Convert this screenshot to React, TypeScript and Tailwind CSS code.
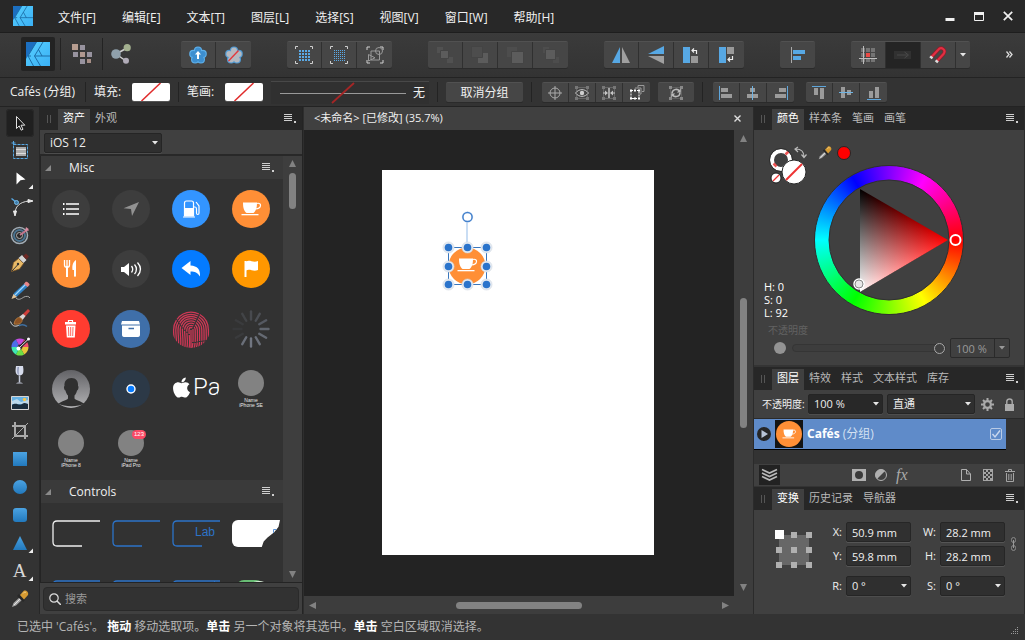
import type { ReactNode } from 'react';
import clsx from 'clsx';
import { FaApple } from 'react-icons/fa';

type SvgProps = { w: number; h?: number; children: ReactNode; className?: string };

function Svg({ w, h = w, children, className }: SvgProps) {
  return (
    <svg width={w} height={h} viewBox={`0 0 ${w} ${h}`} fill="none" className={clsx('shrink-0', className)} aria-hidden="true">
      {children}
    </svg>
  );
}

/* ---------- shared bits ---------- */

function Caret({ className = 'text-[#e6e6e6]' }: { className?: string }) {
  return (
    <Svg w={6} h={4} className={className}>
      <path d="M0 0h6L3 3.4z" fill="currentColor" />
    </Svg>
  );
}

function Separator() {
  return <div className="h-5 w-px shrink-0 bg-[#232323]" />;
}

function PanelMenu() {
  return (
    <button aria-label="面板菜单" className="text-[#cfcfcf]">
      <Svg w={12} h={9}>
        <path d="M0 .5h8M0 2.5h8M0 4.5h8M0 6.5h8" stroke="currentColor" />
        <path d="M10 7h2v2h-2z" fill="currentColor" />
      </Svg>
    </button>
  );
}

function TabBar({ tabs }: { tabs: string[] }) {
  return (
    <div className="flex h-[23px] shrink-0 items-stretch bg-[#272727] pr-1.5">
      <div className="flex w-[18px] items-center pl-[7px]">
        <Svg w={4} h={8}>
          <path d="M.5 0v8M3.5 0v8" stroke="#555" />
        </Svg>
      </div>
      {tabs.map((tab, i) => (
        <button
          key={tab}
          className={clsx('mt-0.5 px-[5px] pb-1 leading-4', i === 0 ? 'bg-[#404040] text-white' : 'text-[#b9b9b9]')}
        >
          {tab}
        </button>
      ))}
      <div className="ml-auto flex items-center">
        <PanelMenu />
      </div>
    </div>
  );
}

type DropdownProps = { label: string; value: string; className?: string; tone?: string };

function Dropdown({ label, value, className, tone = 'bg-[#2f2f2f] text-[#ececec]' }: DropdownProps) {
  return (
    <div className={clsx('relative', className)}>
      <select
        aria-label={label}
        defaultValue={value}
        className={clsx('h-5 w-full appearance-none rounded-xs border border-[#252525] pr-3 pl-[5px] shadow-[0_1px_0_#4d4d4d] outline-none', tone)}
      >
        <option>{value}</option>
      </select>
      <span className="pointer-events-none absolute top-2 right-1">
        <Caret />
      </span>
    </div>
  );
}

/* ---------- title bar ---------- */

function Logo({ size }: { size: number }) {
  return (
    <svg width={size} height={size} viewBox="0 0 24 24" aria-hidden="true">
      <defs>
        <linearGradient id="logo" x1="0" y1="0" x2="1" y2="1">
          <stop offset="0" stopColor="#58d0ff" />
          <stop offset="1" stopColor="#3ab0f5" />
        </linearGradient>
      </defs>
      <path d="M0 0h24v24H0z" fill="url(#logo)" />
      <path d="M0 0h10.500L0 17z" fill="#1c6fc0" />
      <path d="M10.500 0L2 14l5.500 10M17 0L8.500 14H24M8.500 14l6 10M12.500 7.500L16 14M2 14h3" fill="none" stroke="#17649f" strokeWidth=".9" />
    </svg>
  );
}

const menus = ['文件[F]', '编辑[E]', '文本[T]', '图层[L]', '选择[S]', '视图[V]', '窗口[W]', '帮助[H]'];

function TitleBar() {
  return (
    <header className="flex h-[33px] shrink-0 items-center border-b border-[#1e1e1e] bg-[#282828] pl-[13px]">
      <Logo size={20} />
      <nav className="ml-[25px] flex gap-[26px] pt-1 text-xs text-[#f0f0f0]">
        {menus.map((menu) => (
          <button key={menu}>{menu}</button>
        ))}
      </nav>
      <div className="ml-auto flex items-center gap-[19px] pr-3 text-[#f0f0f0]">
        <button aria-label="最小化">
          <Svg w={10}>
            <path d="M.5 7h9v3h-9z" fill="currentColor" />
          </Svg>
        </button>
        <button aria-label="最大化">
          <Svg w={10}>
            <path d="M.5 1.500h9v8h-9z" stroke="currentColor" />
            <path d="M0 1h10v3H0z" fill="currentColor" />
          </Svg>
        </button>
        <button aria-label="关闭">
          <Svg w={10}>
            <path d="M.8.8l8.400 8.400M9.200.8L.8 9.200" stroke="currentColor" strokeWidth="1.700" />
          </Svg>
        </button>
      </div>
    </header>
  );
}

/* ---------- main toolbar ---------- */

type Item = { name: string; icon: ReactNode; className?: string };

function ButtonGroup({ items, small }: { items: Item[]; small?: boolean }) {
  return (
    <div className="flex shrink-0 divide-x divide-[#303030] rounded-xs border-t border-[#515151] bg-[#464646] shadow-[0_1px_0_#2b2b2b]">
      {items.map((item) => (
        <button
          key={item.name}
          aria-label={item.name}
          className={clsx('flex items-center justify-center', small ? 'h-[19px] w-[27px]' : 'h-[26px]', !small && (item.className ?? 'w-[35px]'))}
        >
          {item.icon}
        </button>
      ))}
    </div>
  );
}

const petals = [
  [9, 4.5],
  [13.7, 7.9],
  [11.9, 13.4],
  [6.1, 13.4],
  [4.3, 7.9],
];

function Flower({ fill, edge }: { fill: string; edge: string }) {
  return (
    <>
      {petals.map(([x, y]) => (
        <circle key={x} cx={x} cy={y} r="4.100" fill={edge} />
      ))}
      {petals.map(([x, y]) => (
        <circle key={x} cx={x} cy={y} r="3" fill={fill} />
      ))}
      <circle cx="9" cy="9.500" r="5" fill={fill} />
    </>
  );
}

const corners = 'M1 4V1h3M14 1h3v3M17 14v3h-3M4 17H1v-3';

const styleItems: Item[] = [
  {
    name: '插入样式',
    icon: (
      <Svg w={18}>
        <Flower fill="#3d8fd0" edge="#5fb0ea" />
        <path d="M9 5l3 3.500h-2V13H8V8.500H6z" fill="#fff" />
      </Svg>
    ),
  },
  {
    name: '清除样式',
    icon: (
      <Svg w={18}>
        <Flower fill="#b5b9c0" edge="#4f9ad4" />
        <path d="M3.500 15L13.500 4.500" stroke="#e2383d" strokeWidth="1.400" />
      </Svg>
    ),
  },
];

const gridItems: Item[] = [
  {
    name: '像素对齐',
    icon: (
      <Svg w={18}>
        <path d="M.5 3V.5H3M15 .5h2.500V3M17.500 15v2.500H15M3 17.500H.5V15" stroke="#d0d0d0" />
        <path d="M5 4v11M8 4v11M11 4v11M14 4v11" stroke="#5aa9e6" strokeWidth="2" strokeDasharray="2 1" />
      </Svg>
    ),
  },
  {
    name: '细网格',
    icon: (
      <Svg w={18}>
        <path d="M.5 3V.5H3M15 .5h2.500V3M17.500 15v2.500H15M3 17.500H.5V15" stroke="#d0d0d0" />
        <path d="M4.500 4v11M6.500 4v11M8.500 4v11M10.500 4v11M12.500 4v11M14.500 4v11" stroke="#5aa9e6" strokeDasharray="1 1" />
      </Svg>
    ),
  },
  {
    name: '对象边界',
    icon: (
      <Svg w={18}>
        <path d={corners} stroke="#d0d0d0" />
        <path d="M5 5h8.500v9H5z" stroke="#999" />
        <circle cx="13" cy="5" r="3.500" stroke="#999" />
        <path d="M2.500 8.500v6.500l6.500-3.200z" stroke="#999" />
      </Svg>
    ),
  },
];

const orderItems: Item[] = [
  {
    name: '移到最后',
    icon: (
      <Svg w={18}>
        <path d="M1 1h6v6H1zM11 11h6v6h-6z" fill="#515151" />
        <path d="M4.500 4.500h8v8h-8z" fill="#5c5c5c" stroke="#444" />
      </Svg>
    ),
  },
  {
    name: '后移一层',
    icon: (
      <Svg w={18}>
        <path d="M7 7h10v10H7z" fill="#5c5c5c" />
        <path d="M.5.5h11v11H.5z" fill="#4d4d4d" stroke="#444" />
      </Svg>
    ),
  },
  {
    name: '前移一层',
    icon: (
      <Svg w={18}>
        <path d="M1 1h10v10H1z" fill="#4d4d4d" />
        <path d="M5.500 5.500h12v12h-12z" fill="#5c5c5c" stroke="#444" />
      </Svg>
    ),
  },
  {
    name: '移到最前',
    icon: (
      <Svg w={18}>
        <path d="M1 1h6v6H1zM11 11h6v6h-6z" fill="#4d4d4d" />
        <path d="M3.500 3.500h10v10h-10z" fill="#5c5c5c" stroke="#444" />
      </Svg>
    ),
  },
];

const flipItems: Item[] = [
  {
    name: '水平翻转',
    icon: (
      <Svg w={18}>
        <path d="M8 1v16H0z" fill="#57a8e4" />
        <path d="M10 1v16h8z" fill="#a0a0a0" />
      </Svg>
    ),
  },
  {
    name: '垂直翻转',
    icon: (
      <Svg w={18}>
        <path d="M17 0v8H1z" fill="#57a8e4" />
        <path d="M17 18v-8H1z" fill="#a0a0a0" />
      </Svg>
    ),
  },
  {
    name: '逆时针旋转',
    icon: (
      <Svg w={18}>
        <path d="M1 1h7v16H1z" fill="#57a8e4" />
        <path d="M9 10h7v7H9z" fill="#999" />
        <path d="M14.500 8V4.500H10M12 2.500l-2 2 2 2" stroke="#eee" strokeWidth="1.200" />
      </Svg>
    ),
  },
  {
    name: '顺时针旋转',
    icon: (
      <Svg w={18}>
        <path d="M1 1h7v16H1z" fill="#57a8e4" />
        <path d="M9 1h7v7H9z" fill="#999" />
        <path d="M14.500 10v3.500H10M12 11.500l-2 2 2 2" stroke="#eee" strokeWidth="1.200" />
      </Svg>
    ),
  },
];

const alignItems: Item[] = [
  {
    name: '对齐',
    icon: (
      <Svg w={16}>
        <path d="M1.500 0v16" stroke="#aaa" />
        <path d="M3 3h12v4H3zM3 9h8v4H3z" fill="#57a8e4" />
      </Svg>
    ),
  },
];

const snapItems: Item[] = [
  {
    name: '显示网格',
    icon: (
      <Svg w={18}>
        <path d="M2 2h4v4H2zM7 2h4v4H7zM12 2h4v4h-4zM2 7h4v4H2zM12 7h4v4h-4zM2 12h4v4H2zM7 12h4v4H7zM12 12h4v4h-4z" fill="#747474" />
        <path d="M7 7h4v4H7z" fill="#ea4a45" />
        <path d="M4.500 0v18M0 12.500h18" stroke="#bdbdbd" />
      </Svg>
    ),
  },
  {
    name: '移动方式',
    className: 'w-[35px] bg-[#242424]',
    icon: (
      <Svg w={18} h={10}>
        <path d="M0 1h17v8H0z" fill="#313131" />
        <path d="M3 5h11M10.500 2l4 3-4 3" stroke="#494949" />
      </Svg>
    ),
  },
  {
    name: '吸附',
    icon: (
      <Svg w={18}>
        <path d="M2.500 11L9 4c3.500-4 8.500 0 5.500 4L8 15" stroke="#8f1d28" strokeWidth="3.600" />
        <path d="M2.500 11L9 4c3.500-4 8.500 0 5.500 4L8 15" stroke="#e22f43" strokeWidth="2.200" />
        <path d="M1.500 12.300l1.600-1.800M7 16.300l1.600-1.800" stroke="#ddd" strokeWidth="3.200" />
      </Svg>
    ),
  },
  { name: '吸附选项', className: 'w-3.5', icon: <Caret /> },
];

function Toolbar() {
  return (
    <div className="flex h-[45px] shrink-0 items-center border-b border-[#232323] bg-linear-to-b from-[#3b3b3b] to-[#333] pr-3 pb-0.5 pl-[21px]">
      <button aria-label="设计角色" className="flex size-[34px] items-center justify-center rounded-xs bg-[#232323]">
        <Logo size={24} />
      </button>
      <div className="ml-[5px] h-8 w-px bg-[#232323]" />
      <button aria-label="像素角色" className="flex w-[41px] justify-center">
        <Svg w={20}>
          <path d="M0 0h6v6H0z" fill="#b79d90" />
          <path d="M8 1h5v5H8zM1 8h5v5H1zM15 8h5v5h-5zM8 15h5v5H8z" fill="#98939f" />
          <path d="M8 8h5v5H8z" fill="#b0988f" />
          <path d="M15 15h4v4h-4z" fill="#a78e86" />
        </Svg>
      </button>
      <div className="h-8 w-px bg-[#232323]" />
      <button aria-label="导出角色" className="ml-2">
        <Svg w={20}>
          <path d="M5 10L16 4M5 10l10 7" stroke="#d0d0d0" strokeWidth="1.500" />
          <circle cx="5" cy="10" r="4.800" fill="#8fa0ab" />
          <circle cx="16.200" cy="3.700" r="3.600" fill="#a3b08f" />
          <circle cx="15" cy="16.800" r="3" fill="#b1acb8" />
        </Svg>
      </button>
      <div className="ml-[50px] flex gap-9">
        <ButtonGroup items={styleItems} />
        <ButtonGroup items={gridItems} />
        <ButtonGroup items={orderItems} />
        <ButtonGroup items={flipItems} />
        <ButtonGroup items={alignItems} />
        <ButtonGroup items={snapItems} />
      </div>
      <button aria-label="更多" className="ml-auto text-[#ddd]">
        <Svg w={7}>
          <path d="M.5.500l2.500 3-2.500 3M3.500.500l2.500 3-2.500 3" stroke="currentColor" strokeWidth="1.300" />
        </Svg>
      </button>
    </div>
  );
}

/* ---------- context bar ---------- */

function NoneSwatch({ label }: { label: string }) {
  return (
    <button aria-label={label} className="overflow-hidden rounded-xs shadow-[0_1px_0_#555]">
      <Svg w={38} h={18}>
        <path d="M0 0h38v18H0z" fill="#fff" />
        <path d="M9.500 18L28.500 0" stroke="#e02b2b" strokeWidth="1.500" />
      </Svg>
    </button>
  );
}

const frame = 'M2.500 2.500h11v11h-11z';
const frameDots = 'M1 1h3v3H1zM12 1h3v3h-3zM1 12h3v3H1zM12 12h3v3h-3z';

const transformItems: Item[] = [
  {
    name: '变换原点',
    icon: (
      <Svg w={16}>
        <circle cx="8" cy="8" r="5" stroke="#aaa" />
        <path d="M8 1v14M1 8h14" stroke="#aaa" />
      </Svg>
    ),
  },
  {
    name: '隐藏选区',
    icon: (
      <Svg w={16}>
        <path d={frame} stroke="#666" />
        <path d={frameDots} fill="#777" />
        <path d="M1.500 8c3.500-4.500 9.500-4.500 13 0-3.500 4.500-9.500 4.500-13 0z" fill="#464646" stroke="#c4c4c4" />
        <circle cx="8" cy="8" r="2.200" fill="#d0d0d0" />
      </Svg>
    ),
  },
  {
    name: '显示对齐手柄',
    icon: (
      <Svg w={16}>
        <path d={frame} stroke="#666" />
        <path d={frameDots} fill="#777" />
        <path d="M8 3v10" stroke="#c4c4c4" strokeWidth="1.500" />
        <path d="M2 8h3M14 8h-3" stroke="#c4c4c4" />
        <path d="M4 5.500L7 8l-3 2.500zM12 5.500L9 8l3 2.500z" fill="#c4c4c4" />
      </Svg>
    ),
  },
  {
    name: '循环选择框',
    icon: (
      <Svg w={16}>
        <path d="M6 3.500V3h6v6h-1M9 2.500V.500h6v6h-2" stroke="#999" />
        <path d="M2 5.500h8v8H2z" stroke="#fff" strokeDasharray="2 1" />
        <path d="M1 4.500h2v2H1zM9 4.500h2v2H9zM1 12.500h2v2H1zM9 12.500h2v2H9zM5 4.500h2v2H5zM5 12.500h2v2H5z" fill="#fff" />
      </Svg>
    ),
  },
];

const horizontalItems: Item[] = [
  {
    name: '左对齐',
    icon: (
      <Svg w={14}>
        <path d="M.5 0v14" stroke="#5ea6dc" />
        <path d="M2 2h7v4H2zM2 8h11v4H2z" fill="#9b9b9b" />
      </Svg>
    ),
  },
  {
    name: '水平居中',
    icon: (
      <Svg w={14}>
        <path d="M4 2h5v4H4zM1 8h11v4H1z" fill="#9b9b9b" />
        <path d="M6.500 0v14" stroke="#6fb4e4" />
      </Svg>
    ),
  },
  {
    name: '右对齐',
    icon: (
      <Svg w={14}>
        <path d="M13.500 0v14" stroke="#5ea6dc" />
        <path d="M5 2h7v4H5zM1 8h11v4H1z" fill="#9b9b9b" />
      </Svg>
    ),
  },
];

const verticalItems: Item[] = [
  {
    name: '顶部对齐',
    icon: (
      <Svg w={14}>
        <path d="M0 .5h14" stroke="#5ea6dc" />
        <path d="M2 2h4v7H2zM8 2h4v11H8z" fill="#9b9b9b" />
      </Svg>
    ),
  },
  {
    name: '垂直居中',
    icon: (
      <Svg w={14}>
        <path d="M2 1h4v11H2zM8 4h4v5H8z" fill="#9b9b9b" />
        <path d="M0 6.500h14" stroke="#6fb4e4" />
      </Svg>
    ),
  },
  {
    name: '底部对齐',
    icon: (
      <Svg w={14}>
        <path d="M0 13.500h14" stroke="#5ea6dc" />
        <path d="M2 5h4v7H2zM8 1h4v11H8z" fill="#9b9b9b" />
      </Svg>
    ),
  },
];

function ContextBar() {
  return (
    <div className="flex h-[29px] shrink-0 items-center border-b border-[#232323] bg-[#333] pl-2.5 text-xs text-[#f0f0f0]">
      <span className="w-[67px] shrink-0 whitespace-nowrap">Cafés (分组)</span>
      <div className="ml-2 flex items-center gap-2">
        <Separator />
        <span className="mr-0.5 w-7 whitespace-nowrap">填充:</span>
        <NoneSwatch label="填充" />
        <Separator />
        <span className="mr-0.5 w-7 whitespace-nowrap">笔画:</span>
        <NoneSwatch label="笔画" />
        <button className="flex h-[23px] w-[158px] items-center justify-end gap-1 border-t border-[#484848] bg-[#303030] pr-1">
          <Svg w={130} h={22}>
            <path d="M1 11.500h126" stroke="#999" />
            <path d="M53 21L75 1" stroke="#a52626" strokeWidth="1.800" />
          </Svg>
          无
        </button>
        <Separator />
        <button className="h-5 w-[77px] rounded-xs border-t border-[#515151] bg-[#464646] leading-4 shadow-[0_1px_0_#2b2b2b]">取消分组</button>
        <Separator />
      </div>
      <div className="ml-2.5 flex items-center gap-2">
        <ButtonGroup small items={transformItems} />
        <button aria-label="更新" className="flex h-5 w-9 items-center justify-center rounded-xs border-t border-[#515151] bg-[#464646]">
          <Svg w={16}>
            <path d={frame} stroke="#5e5e5e" />
            <path d={frameDots} fill="#888" />
            <path d="M4 8.500C4 4.500 9 3 11.500 6M12 7.500c0 4-5 5.500-7.500 2.500" stroke="#bbb" strokeWidth="1.500" />
            <path d="M12.800 3.500v4h-4zM3.200 12.500v-4h4z" fill="#bbb" />
          </Svg>
        </button>
        <Separator />
      </div>
      <div className="ml-2.5 flex gap-3">
        <ButtonGroup small items={horizontalItems} />
        <ButtonGroup small items={verticalItems} />
      </div>
    </div>
  );
}

/* ---------- tools column ---------- */

const corner = <path d="M28 19.500V24h-4.500z" fill="#eee" transform="translate(-1 0)" />;

const tools: Item[] = [
  {
    name: '移动工具',
    icon: (
      <Svg w={28}>
        <path d="M10.500 7.500v12l2.700-2.600 2 4.300 1.800-.9-2-4.100h3.800z" fill="#1a1a1a" stroke="#e0e0e0" />
      </Svg>
    ),
  },
  {
    name: '画板工具',
    icon: (
      <Svg w={28}>
        <path d="M7.500 7.500h14v14h-14z" stroke="#57a8e4" strokeDasharray="3 1" />
        <path d="M10 10h10v9H10z" fill="#aaa" />
        <path d="M10 12.500h10M10 16.500h10" stroke="#ddd" />
        <path d="M5.500 6h4M7.500 4v4" stroke="#57a8e4" />
      </Svg>
    ),
  },
  {
    name: '节点工具',
    icon: (
      <Svg w={28}>
        <path d="M10.500 7.500l9 7-5 .800-4 4.200z" fill="#fff" />
        {corner}
      </Svg>
    ),
  },
  {
    name: '转角工具',
    icon: (
      <Svg w={28}>
        <path d="M9 21c0-7 4-12 14-13" stroke="#ddd" />
        <path d="M5.500 5.500L10 9" stroke="#57a8e4" strokeWidth="1.500" />
        <path d="M7.500 18L9 23l1.500-5zM22 6.500l5 1.500-5 1.500z" fill="#e8e8e8" stroke="#e8e8e8" />
        <circle cx="10.500" cy="9.500" r="2" fill="#3d7aa8" stroke="#79c0ee" />
      </Svg>
    ),
  },
  {
    name: '轮廓图工具',
    icon: (
      <Svg w={28}>
        <circle cx="13.500" cy="14.500" r="8" stroke="#a2adb6" strokeWidth="1.500" />
        <circle cx="13.500" cy="14.500" r="5.500" stroke="#4a7390" strokeWidth="2" />
        <circle cx="13.500" cy="14.500" r="3" fill="#272727" stroke="#b0b0b0" />
        <path d="M14 14l7-5" stroke="#c5758c" strokeWidth="2" />
        <path d="M19 10l1-4 2 1.500 1 2z" fill="#d98da2" />
      </Svg>
    ),
  },
  {
    name: '钢笔工具',
    icon: (
      <Svg w={28}>
        <path d="M5.500 22.500l2-9 5-4 5 5-4 5.500z" fill="#e8ba68" stroke="#7c5523" strokeWidth=".7" />
        <path d="M6 22l6-6.500" stroke="#333" />
        <circle cx="12" cy="15" r="1.200" fill="#333" />
        <path d="M12.500 9L16 6l4.500 5-3 3z" fill="#d4d4d4" />
        <path d="M17 7L20 4.500l3 3-2.500 3z" fill="#6d2925" />
      </Svg>
    ),
  },
  {
    name: '铅笔工具',
    icon: (
      <Svg w={28}>
        <path d="M6 21l2-5L19 6l3.500 3L11 19.500z" fill="#2f81c4" />
        <path d="M9 18L20 7" stroke="#9ed7ff" strokeWidth="1.200" />
        <path d="M18 7l1.500-2c1-1 4.500 1.500 4 3l-2 2z" fill="#e78686" />
        <path d="M5.500 22l2-5 3.500 3z" fill="#e5c497" />
        <path d="M10 21c3 3 6 0 8-1s5-1 6 1" stroke="#aaa" />
      </Svg>
    ),
  },
  {
    name: '矢量画笔工具',
    icon: (
      <Svg w={28}>
        <path d="M22 4l2 2-7 8-3-2z" fill="#cf3f3a" />
        <path d="M17 9l2.500 2-3 4-3.500-3z" fill="#d5d5d5" />
        <path d="M8 19c1-6 5-8 8-5 1 4-3 6-8 5z" fill="#8d5324" stroke="#c68947" strokeWidth=".7" />
        <path d="M4.500 16.500c2 6 6 5 9 3.500" stroke="#ddd" />
        <path d="M13 21c3-2 6-1 8 .5" stroke="#3f6f9f" strokeWidth="1.500" />
      </Svg>
    ),
  },
  {
    name: '渐变工具',
    icon: (
      <Svg w={28}>
        <g strokeWidth="6">
          <path d="M19.500 14A5.500 5.500 0 0 1 16.700 18.800" stroke="#e8c53a" />
          <path d="M16.700 18.800A5.500 5.500 0 0 1 11.300 18.800" stroke="#6fdf45" />
          <path d="M11.300 18.800A5.500 5.500 0 0 1 8.500 14" stroke="#3ee7b2" />
          <path d="M8.500 14A5.500 5.500 0 0 1 11.300 9.200" stroke="#4d6dea" />
          <path d="M11.300 9.200A5.500 5.500 0 0 1 16.700 9.200" stroke="#c24be0" />
          <path d="M16.700 9.200A5.500 5.500 0 0 1 19.500 14" stroke="#ef4f6c" />
        </g>
        <path d="M12.500 15.500L22.500 6" stroke="#222" strokeWidth="3" />
        <path d="M12.500 15.500L22.500 6" stroke="#eee" />
        <circle cx="12.500" cy="15.500" r="2" fill="#fff" />
        <circle cx="22.500" cy="6" r="1.500" fill="#fff" />
      </Svg>
    ),
  },
  {
    name: '透明度工具',
    icon: (
      <Svg w={28}>
        <path d="M10 5h7c1 6 .5 9.500-3.500 9.500S9 11 10 5z" fill="#d7dcec" />
        <path d="M11.500 6h1.500c-.5 4-.5 6 0 8-2-1-2-4-1.500-8z" fill="#8f98b8" />
        <path d="M13.500 14.500v7" stroke="#c3c8d8" strokeWidth="1.500" />
        <path d="M10 22.500c0-1.500 7-1.500 7 0z" fill="#c3c8d8" />
      </Svg>
    ),
  },
  {
    name: '置入图像工具',
    icon: (
      <Svg w={28}>
        <path d="M5.500 7.500h17v13h-17z" fill="#67b2e4" stroke="#d5d5d5" />
        <path d="M6 12l5-2 4 3 7-2v4H6z" fill="#b9d8ec" />
        <path d="M6 16c4-3 7 1 10-1s5 0 6 0v5H6z" fill="#182c3d" />
        <circle cx="18.500" cy="10.500" r="1.700" fill="#f6c54c" />
      </Svg>
    ),
  },
  {
    name: '裁剪工具',
    icon: (
      <Svg w={28}>
        <path d="M9 5v14h13M6 9h13v13" stroke="#a9a9a9" strokeWidth="2" />
        <path d="M6 22L22 6" stroke="#a9a9a9" />
      </Svg>
    ),
  },
  {
    name: '矩形工具',
    icon: (
      <Svg w={28}>
        <path d="M7 7h14v14H7z" fill="url(#shape)" />
      </Svg>
    ),
  },
  {
    name: '椭圆工具',
    icon: (
      <Svg w={28}>
        <circle cx="14" cy="14" r="7" fill="url(#shape)" />
      </Svg>
    ),
  },
  {
    name: '圆角矩形工具',
    icon: (
      <Svg w={28}>
        <rect x="7" y="7" width="14" height="14" rx="3" fill="url(#shape)" />
      </Svg>
    ),
  },
  {
    name: '三角形工具',
    icon: (
      <Svg w={28}>
        <path d="M14 7l7 14H7z" fill="url(#shape)" />
        {corner}
      </Svg>
    ),
  },
  {
    name: '文本工具',
    icon: (
      <span className="relative flex size-7 items-center justify-center font-['Liberation_Serif',serif] text-[19px] leading-5 text-[#d8d8d8]">
        A
        <Svg w={28} className="absolute inset-0">
          {corner}
        </Svg>
      </span>
    ),
  },
  { name: '颜色选取器工具', icon: <Eyedropper size={28} /> },
];

function Eyedropper({ size }: { size: number }) {
  return (
    <svg width={size} height={size} viewBox="0 0 28 28" fill="none" aria-hidden="true">
      <path d="M6 22l1.500-4 7-6.500 2.500 2.500-7 6.500z" fill="#a6a6a6" />
      <path d="M8 20l7-7" stroke="#e5e5e5" />
      <path d="M12 10l6 6" stroke="#282828" strokeWidth="2.500" />
      <path d="M14 10l3.500-4c2-1.500 5.500 1 4.500 4l-4 4.500z" fill="#d79b32" />
      <path d="M17 8.500c1-1.500 2-1.500 3-1" stroke="#f7d78d" />
    </svg>
  );
}

function ToolColumn() {
  return (
    <div className="flex w-10 shrink-0 flex-col items-center border-r border-[#272727] bg-[#333] pt-0.5">
      <Svg w={0}>
        <defs>
          <linearGradient id="shape" x1="0" y1="0" x2="0" y2="1">
            <stop offset="0" stopColor="#4ba3e2" />
            <stop offset="1" stopColor="#2279bd" />
          </linearGradient>
        </defs>
      </Svg>
      {tools.map((tool, i) => (
        <button key={tool.name} aria-label={tool.name} className={clsx('size-7 shrink-0 rounded-sm', i === 0 && 'bg-[#202020] ring-1 ring-[#292929] ring-inset')}>
          {tool.icon}
        </button>
      ))}
    </div>
  );
}

/* ---------- assets panel ---------- */

function Disc({ fill, children }: { fill: string; children?: ReactNode }) {
  return (
    <Svg w={38}>
      <circle cx="19" cy="19" r="19" fill={fill} />
      {children}
    </Svg>
  );
}

const cup = (
  <>
    <path d="M11 12.500h14c0 5.500-1 8.500-3.500 10.500h-7c-2.500-2-3.500-5-3.500-10.500z" fill="#fff" />
    <path d="M24.500 13.500c3-.8 4.300.5 4 2.200-.3 2-1.800 3.300-5 3.300" stroke="#fff" strokeWidth="1.200" />
    <path d="M9.500 24h17v1.300h-17z" fill="#fff" />
  </>
);

const rings = [2, 4.2, 6.4, 8.6, 10.8, 13, 15.2, 17.4];
const spokes = [0, 1, 2, 3, 4, 5, 6, 7, 8, 9, 10, 11];
const spokeShade = ['#484a4f', '#4c4f55', '#555962', '#60656e', '#656a73', '#6a6f79', '#717681', '#6a6f79', '#3a3b3d', '#37383a', '#3a3b3d', '#424447'];

function DeviceBadge({ device, count }: { device: string; count?: string }) {
  return (
    <div className="relative flex w-[38px] flex-col items-center font-['Liberation_Sans',sans-serif] text-[5px] leading-[5px] text-[#e8e8e8]">
      <Svg w={26}>
        <circle cx="13" cy="13" r="13" fill="#828282" />
      </Svg>
      {count && <span className="absolute top-0 right-1 rounded-full bg-[#fb4a66] px-0.5 py-0.5 text-[6px] leading-[5px] text-white">{count}</span>}
      <span className="mt-0.5 whitespace-nowrap">Name</span>
      <span className="whitespace-nowrap">{device}</span>
    </div>
  );
}

const miscAssets: Item[] = [
  {
    name: '列表',
    icon: (
      <Disc fill="#3d3d3d">
        <path d="M14 14h13M14 19h13M14 24h13" stroke="#fff" strokeWidth="1.500" />
        <path d="M11 14h1.500M11 19h1.500M11 24h1.500" stroke="#fff" strokeWidth="2" />
      </Disc>
    ),
  },
  {
    name: '定位',
    icon: (
      <Disc fill="#3d3d3d">
        <path d="M27 12l-7 14-1-7-7.500-.800z" fill="#929292" />
      </Disc>
    ),
  },
  {
    name: '加油站',
    icon: (
      <Disc fill="#3395ff">
        <path d="M12.500 26V13c0-1.500.5-2 2-2h5c1.500 0 2 .5 2 2v13z" stroke="#fff" strokeWidth="1.200" />
        <path d="M12 18h10v8H12z" fill="#fff" />
        <path d="M11 27h12" stroke="#fff" />
        <path d="M22 17h1c1 0 1.500.6 1.500 2v4c0 2 2.500 2 2.500 0v-7l-3-4" stroke="#fff" strokeWidth="1.200" />
      </Disc>
    ),
  },
  { name: '咖啡馆', icon: <Disc fill="#ff8f36">{cup}</Disc> },
  {
    name: '餐厅',
    icon: (
      <Disc fill="#ff8f36">
        <path d="M12.500 10v5c0 3 5 3 5 0v-5M15 10v17" stroke="#fff" strokeWidth="1.300" />
        <path d="M15 16v11" stroke="#fff" strokeWidth="2" />
        <path d="M24 10c-3 2-4 5-3.500 10h1.500v6c0 1 2 1 2 0z" fill="#fff" />
      </Disc>
    ),
  },
  {
    name: '音量',
    icon: (
      <Disc fill="#3d3d3d">
        <path d="M9 17h3l5-4v13l-5-4H9z" fill="#fff" />
        <path d="M19.500 16c1.500 2 1.500 4.500 0 6.500M22.500 14.500c2.500 3 2.500 6.500 0 9.500M25.500 12.500c4 4.500 4 9 0 13.500" stroke="#fff" strokeWidth="1.300" />
      </Disc>
    ),
  },
  {
    name: '回复',
    icon: (
      <Disc fill="#047bff">
        <path d="M9.500 18l9-7v4.500c7 .500 10 4 9.500 11-2.500-4-5-5-9.500-5V25z" fill="#fff" />
      </Disc>
    ),
  },
  {
    name: '旗标',
    icon: (
      <Disc fill="#ff9700">
        <path d="M13.500 11v16" stroke="#fff" strokeWidth="2" />
        <path d="M14 11.500c4-2 7 1.500 12-.500v9c-5 2-8-1.500-12 .500z" fill="#fff" />
      </Disc>
    ),
  },
  {
    name: '废纸篓',
    icon: (
      <Disc fill="#ff3c30">
        <path d="M16.500 12v-1.500h4V12" stroke="#fff" strokeWidth="1.200" />
        <path d="M13 12h11v2.500H13zM14 15.500h9.500l-.700 12h-8z" fill="#fff" />
        <path d="M16.500 17l.300 9M18.700 17v9M21 17l-.300 9" stroke="#ff3c30" strokeWidth=".8" />
      </Disc>
    ),
  },
  {
    name: '归档',
    icon: (
      <Disc fill="#3f6fa9">
        <path d="M10 11h17l1 3.500H9zM10 15.500h18v9c0 1.500-.5 2.500-2 2.500H12c-1.500 0-2-1-2-2.500z" fill="#fff" />
        <path d="M16.500 18.500h5.500" stroke="#3f6fa9" strokeWidth="1.500" />
      </Disc>
    ),
  },
  {
    name: '指纹',
    icon: (
      <Svg w={38}>
        <clipPath id="finger">
          <circle cx="19" cy="19" r="19" />
        </clipPath>
        <g clipPath="url(#finger)" stroke="#cf3856" strokeWidth="1.300">
          {rings.map((r) => (
            <path key={r} d={`M${19 - r} 38c1.500-5 0-12 0-18a${r} ${r + 0.5} 0 0 1 ${r * 2} 0c0 7 .5 12-1 18`} strokeDasharray={`${r + 11} 1 ${r + 7} 1`} />
          ))}
          <path d="M19 20v18" />
        </g>
      </Svg>
    ),
  },
  {
    name: '加载中',
    icon: (
      <Svg w={38}>
        {spokes.map((n) => (
          <path key={n} d="M19 1.500v8" stroke={spokeShade[n]} strokeWidth="2.400" strokeLinecap="round" transform={`rotate(${n * 30} 19 19)`} />
        ))}
      </Svg>
    ),
  },
  {
    name: '联系人',
    icon: (
      <Svg w={38}>
        <defs>
          <linearGradient id="person" x1="0" y1="0" x2="0" y2="1">
            <stop offset="0" stopColor="#626266" />
            <stop offset="1" stopColor="#b2b2b4" />
          </linearGradient>
        </defs>
        <circle cx="19" cy="19" r="19" fill="url(#person)" />
        <path d="M19.500 8c4.500 0 7 3 6.500 8 1 .5.500 4-1 4.500-.5 2.500-1.500 4-2.500 5v3c1.500 2 6 2.500 9.500 5C27 37 12 37 6.500 33.500 10 31 14.500 30.500 16 28.500v-3c-1-1-2-2.500-2.500-5-1.500-.5-2-4-1-4.500C12 11 15 8 19.500 8z" fill="#303030" />
      </Svg>
    ),
  },
  {
    name: '当前位置',
    icon: (
      <Disc fill="#2c3947">
        <circle cx="19" cy="19" r="4" fill="#087cff" stroke="#fff" strokeWidth="1.400" />
      </Disc>
    ),
  },
  {
    name: '支付',
    icon: (
      <span className="flex h-[34px] items-center text-white">
        <FaApple className="-ml-0.5 size-[23px] shrink-0" />
        <span className="font-[Roboto,sans-serif] text-2xl leading-7 font-light [clip-path:polygon(0_0,100%_0,100%_50%,78%_100%,0_100%)]">Pa</span>
      </span>
    ),
  },
  { name: 'iPhone SE', icon: <DeviceBadge device="iPhone SE" /> },
  { name: 'iPhone 8', icon: <DeviceBadge device="iPhone 8" /> },
  { name: 'iPad Pro', icon: <DeviceBadge device="iPad Pro" count="123" /> },
];

function FieldOutline({ stroke, children }: { stroke: string; children?: ReactNode }) {
  return (
    <Svg w={49} h={27}>
      <path d="M48 1H5C2.500 1 1 2.500 1 5v17c0 2.500 1.500 4 4 4h25" stroke={stroke} strokeWidth="1.300" />
      {children}
    </Svg>
  );
}

function SectionHeader({ title }: { title: string }) {
  return (
    <div className="flex h-[23px] shrink-0 items-center bg-[#3a3a3a] pr-[9px] pl-1 text-xs text-[#f0f0f0]">
      <Svg w={6}>
        <path d="M6 0v6H0z" fill="#8a8a8a" />
      </Svg>
      <span className="ml-[18px] flex-1">{title}</span>
      <PanelMenu />
    </div>
  );
}

function AssetsPanel() {
  return (
    <section className="flex w-[263px] shrink-0 flex-col border-r border-[#242424] bg-[#404040]">
      <TabBar tabs={['资产', '外观']} />
      <div className="border-b-2 border-[#282828] px-1 pt-[3px] pb-px">
        <Dropdown label="资产类别" value="iOS 12" className="w-[118px] text-xs" />
      </div>
      <div className="flex min-h-0 flex-1">
        <div className="min-w-0 flex-1 overflow-hidden border-b border-l border-[#242424] bg-[#323232]">
          <SectionHeader title="Misc" />
          <div className="grid h-[301px] grid-cols-[repeat(4,60px)] grid-rows-[repeat(5,60px)]">
            {miscAssets.map((asset) => (
              <button key={asset.name} aria-label={asset.name} className="flex items-start pt-[11px] pl-[11px]">
                {asset.icon}
              </button>
            ))}
          </div>
          <SectionHeader title="Controls" />
          <div className="grid grid-cols-[repeat(4,60px)] grid-rows-[repeat(2,60px)] pt-[17px] pl-[11px]">
            <FieldOutline stroke="#eee" />
            <FieldOutline stroke="#2c73c8" />
            <div className="relative w-12">
              <FieldOutline stroke="#2c73c8" />
              <span className="absolute top-1 left-[23px] font-['Liberation_Sans',sans-serif] text-xs leading-4 text-[#2c73c8]">Lab</span>
            </div>
            <div className="relative h-[27px] w-12 overflow-hidden rounded-l-md bg-white [clip-path:polygon(0_0,100%_0,97%_25%,88%_45%,74%_65%,66%_80%,62%_100%,0_100%)]">
              <Svg w={48} h={27}>
                <path d="M41.500 18V9.500H46" stroke="#5c94d8" />
              </Svg>
            </div>
            <FieldOutline stroke="#2c73c8" />
            <FieldOutline stroke="#2c73c8" />
            <FieldOutline stroke="#2c73c8">
              <path d="M42.500 1v12" stroke="#2c73c8" />
            </FieldOutline>
            <Svg w={49} h={27}>
              <rect x="4" y="0" width="28" height="26" rx="8" fill="#69bd75" />
              <circle cx="27" cy="14" r="13" fill="#dcefdc" />
            </Svg>
          </div>
        </div>
        <div className="flex w-[19px] flex-col items-center border-b border-[#242424] bg-[#3e3e3e] pt-1 pb-1">
          <Svg w={7} h={7}>
            <path d="M3.500 0L7 7H0z" fill="#828282" />
          </Svg>
          <div className="mt-1.5 h-9 w-[7px] rounded-full bg-[#828282]" />
          <Svg w={7} h={7} className="mt-auto">
            <path d="M3.500 7L7 0H0z" fill="#828282" />
          </Svg>
        </div>
      </div>
      <div className="px-[3px] pt-1 pb-[3px]">
        <label className="flex h-6 items-center rounded-sm border border-[#2a2a2a] bg-[#323232] pl-[5px]">
          <Svg w={12}>
            <circle cx="5" cy="5" r="4.200" stroke="#ddd" strokeWidth="1.200" />
            <path d="M8 8l4 4" stroke="#ddd" strokeWidth="1.500" />
          </Svg>
          <input type="text" placeholder="搜索" aria-label="搜索" className="ml-1 min-w-0 flex-1 bg-transparent text-[11px] text-white outline-none placeholder:text-[#999]" />
        </label>
      </div>
    </section>
  );
}

/* ---------- document ---------- */

function SelectedObject() {
  const handles = [
    [20, 50], [39, 50], [58, 50],
    [20, 69], [58, 69],
    [20, 87], [39, 87], [58, 87],
  ];
  return (
    <svg width="78" height="107" viewBox="0 0 78 107" fill="none" className="absolute top-[27px] left-[46px]" aria-hidden="true">
      <circle cx="39" cy="69" r="18.500" fill="#ff8f36" />
      <g transform="translate(20 49)">{cup}</g>
      <path d="M39 24v24" stroke="#bcd5f1" strokeWidth="1.600" />
      <circle cx="39.500" cy="20" r="5.800" fill="#e0ebf8" />
      <circle cx="39.500" cy="20" r="4.600" fill="#fff" stroke="#4481cc" strokeWidth="1.500" />
      <path d="M20.500 50.500h38v37h-38z" stroke="#3a77bd" />
      {handles.map(([x, y]) => (
        <g key={`${x}-${y}`}>
          <circle cx={x + 0.5} cy={y + 0.5} r="5.600" fill="#e4eaf2" stroke="#cfd6df" strokeWidth=".5" />
          <circle cx={x + 0.5} cy={y + 0.5} r="3.800" fill="#2b74cb" />
        </g>
      ))}
    </svg>
  );
}

function DocumentView() {
  return (
    <main className="flex min-w-0 flex-1 flex-col border-l border-[#2e2e2e] bg-[#3d3d3d]">
      <div className="flex h-[23px] shrink-0 items-center justify-between bg-[#404040] pr-3 pl-2.5 text-[#f0f0f0]">
        <span>&lt;未命名&gt; [已修改] (35.7%)</span>
        <button aria-label="关闭文档">
          <Svg w={7}>
            <path d="M.5.500l6 6M6.500.500l-6 6" stroke="#ddd" strokeWidth="1.400" />
          </Svg>
        </button>
      </div>
      <div className="flex min-h-0 flex-1">
        <div className="flex min-w-0 flex-1 items-center justify-center overflow-hidden bg-[#232323] pr-0.5 pb-0.5">
          <div className="relative h-[385px] w-[272px] shrink-0 bg-white">
            <SelectedObject />
          </div>
        </div>
        <div className="flex w-[19px] flex-col items-center pt-[5px] pb-[5px]">
          <Svg w={7}>
            <path d="M3.500 0L7 7H0z" fill="#828282" />
          </Svg>
          <div className="mt-[156px] h-[130px] w-[7px] rounded-full bg-[#828282]" />
          <Svg w={7} className="mt-auto">
            <path d="M3.500 7L7 0H0z" fill="#828282" />
          </Svg>
        </div>
      </div>
      <div className="flex h-[18px] shrink-0 items-center justify-between pr-6 pl-[5px]">
        <Svg w={7}>
          <path d="M0 3.500L7 0v7z" fill="#828282" />
        </Svg>
        <div className="h-[7px] w-[126px] rounded-full bg-[#828282]" />
        <Svg w={7}>
          <path d="M7 3.500L0 0v7z" fill="#828282" />
        </Svg>
      </div>
    </main>
  );
}

/* ---------- right side ---------- */

function ColourWheel() {
  return (
    <div className="relative size-[150px] rounded-full border border-[#303030] bg-[conic-gradient(from_90deg,#f00,#ff0,#0f0,#0ff,#00f,#f0f,#f00)]">
      <svg width="150" height="150" viewBox="0 0 150 150" fill="none" className="absolute -top-px -left-px" aria-hidden="true">
        <defs>
          <linearGradient id="hue" gradientUnits="userSpaceOnUse" x1="46" y1="0" x2="134" y2="0">
            <stop stopColor="#000" />
            <stop offset="1" stopColor="#f00" />
          </linearGradient>
          <linearGradient id="tint" gradientUnits="userSpaceOnUse" x1="90" y1="49.500" x2="46" y2="127">
            <stop stopColor="#fff" stopOpacity="0" />
            <stop offset="1" stopColor="#fff" />
          </linearGradient>
        </defs>
        <circle cx="75" cy="75" r="60" fill="#404040" stroke="#303030" />
        <g className="isolate">
          <path d="M46 24l88 51-88 52z" fill="url(#hue)" />
          <path d="M46 24l88 51-88 52z" fill="url(#tint)" className="mix-blend-plus-lighter" />
        </g>
        <circle cx="141.500" cy="75" r="5" stroke="#fff" strokeWidth="2" />
        <circle cx="45" cy="119" r="5" fill="#e8e8e8" stroke="#fff" strokeWidth="1.500" />
        <circle cx="45" cy="119" r="4" stroke="#888" />
      </svg>
    </div>
  );
}

function ColourPanel() {
  return (
    <section className="flex h-[260px] shrink-0 flex-col border-b-2 border-[#343434]">
      <TabBar tabs={['颜色', '样本条', '笔画', '画笔']} />
      <div className="flex pt-4 pl-2.5">
        <div className="flex w-[50px] shrink-0 flex-col justify-between">
          <button aria-label="填充和笔画颜色">
            <Svg w={44} h={40}>
              <circle cx="17" cy="14" r="9" stroke="#fff" strokeWidth="4" />
              <path d="M9.500 17.500l3 3M21.500 8.500l3-3" stroke="#e55" strokeWidth="2.500" />
              <circle cx="17" cy="14" r="11.500" stroke="#2c2c2c" />
              <circle cx="30" cy="26" r="12" fill="#fff" stroke="#2a2a2a" />
              <path d="M22 34l16-16" stroke="#e33" strokeWidth="2" />
              <circle cx="12" cy="32" r="5" fill="#fff" stroke="#1d1d1d" />
              <path d="M9 35l6-6" stroke="#e33" strokeWidth="1.200" />
              <path d="M32 3c5 0 8 3 8 8M34 1l-3 2 3 3M37.500 8.500l2.500 3 2.500-3" stroke="#bbb" strokeWidth="1.200" />
            </Svg>
          </button>
          <dl className="mb-[-4px] leading-[13px] text-white">
            <div className="text-nowrap">H: 0</div>
            <div className="text-nowrap">S: 0</div>
            <div className="text-nowrap">L: 92</div>
          </dl>
        </div>
        <div>
          <div className="flex h-[19px] items-start gap-px">
            <button aria-label="颜色选取器" className="-mt-1">
              <Eyedropper size={22} />
            </button>
            <button aria-label="选取的颜色" className="size-3.5 rounded-full border border-[#262626] bg-[#f00]" />
          </div>
          <ColourWheel />
        </div>
      </div>
      <label htmlFor="colour-opacity" className="mt-[7px] ml-3.5 text-[10px] leading-4 text-[#626262]">
        不透明度
      </label>
      <div className="flex items-center pr-3.5 pl-5">
        <span className="mr-1.5 size-3 rounded-full bg-[#939393]" />
        <input
          id="colour-opacity"
          type="range"
          defaultValue={100}
          className="h-2 min-w-0 flex-1 appearance-none rounded-full border border-[#353535] bg-[#3d3d3d] [&::-webkit-slider-thumb]:size-[11px] [&::-webkit-slider-thumb]:appearance-none [&::-webkit-slider-thumb]:rounded-full [&::-webkit-slider-thumb]:border [&::-webkit-slider-thumb]:border-[#aaa] [&::-webkit-slider-thumb]:bg-[#404040]"
        />
        <div className="ml-1 flex h-5 w-[60px] items-center divide-x divide-[#2a2a2a] rounded-xs border border-[#2a2a2a]">
          <input aria-label="不透明度值" defaultValue="100 %" className="h-full w-11 bg-transparent pl-[5px] text-[#999] outline-none" />
          <button aria-label="选择不透明度" className="flex h-full flex-1 items-center justify-center">
            <Caret className="text-[#999]" />
          </button>
        </div>
      </div>
    </section>
  );
}

function LayersPanel() {
  return (
    <section className="flex shrink-0 flex-col border-b border-[#343434]">
      <TabBar tabs={['图层', '特效', '样式', '文本样式', '库存']} />
      <div className="flex h-7 items-center pr-2.5 pl-2">
        <span className="w-[46px] shrink-0 text-[10px] whitespace-nowrap text-[#f0f0f0]">不透明度:</span>
        <Dropdown label="不透明度" value="100 %" className="w-[75px]" tone="bg-[#282828] text-[#ececec]" />
        <Dropdown label="混合模式" value="直通" className="ml-1 min-w-0 flex-1" />
        <button aria-label="混合选项" className="ml-1.5">
          <Svg w={13}>
            <circle cx="6.500" cy="6.500" r="3.400" stroke="#aaa" strokeWidth="2.200" />
            <path d="M6.500 0v2.500M6.500 10.500V13M0 6.500h2.500M10.500 6.500H13M2 2l1.700 1.700M9.300 9.300L11 11M11 2L9.300 3.700M3.700 9.300L2 11" stroke="#aaa" strokeWidth="2" />
          </Svg>
        </button>
        <button aria-label="锁定" className="ml-[11px]">
          <Svg w={9} h={13}>
            <path d="M1.800 6V3.500C1.800.200 7.200.200 7.200 3.500V6" stroke="#aaa" strokeWidth="1.400" />
            <path d="M0 6h9v7H0z" fill="#aaa" />
          </Svg>
        </button>
      </div>
      <div className="h-[46px] border-t border-[#2a2a2a] bg-[#333]">
        <div className="mr-[18px] flex h-[31px] items-center border-b border-black bg-[#5f8bc9] pl-[3px]">
          <button aria-label="展开">
            <Svg w={14}>
              <circle cx="7" cy="7" r="7" fill="#262626" />
              <path d="M4.500 3l6.500 4-6.500 4z" fill="#b8c4d6" />
            </Svg>
          </button>
          <div className="ml-1 flex size-7 items-center justify-center bg-[#141414]">
            <svg width="26" height="26" viewBox="0 0 38 38" fill="none" aria-hidden="true">
              <circle cx="19" cy="19" r="19" fill="#ff8f36" />
              {cup}
            </svg>
          </div>
          <span className="ml-1 flex-1 text-xs text-[#d3e0f2]">
            <b className="text-white">Cafés</b> (分组)
          </span>
          <label className="relative mr-1 size-3">
            <input type="checkbox" defaultChecked aria-label="显示图层" className="block size-3 appearance-none rounded-xs border border-[#b9cbe6]" />
            <Svg w={12} className="pointer-events-none absolute inset-0">
              <path d="M2.500 6l2.500 3 5-6.500" stroke="#c9d7ee" strokeWidth="1.400" />
            </Svg>
          </label>
        </div>
      </div>
      <div className="flex h-[22px] items-center pr-[9px] pl-[5px] text-[#aaa]">
        <button aria-label="编辑所有图层" className="flex h-5 w-[21px] items-center justify-center bg-[#222]">
          <Svg w={17} h={14}>
            <path d="M1 1.500l7.500 3.500L16 1.500M1 5l7.500 3.500L16 5M1 8.500L8.500 12 16 8.500" stroke="#b8b8b8" strokeWidth="1.700" />
          </Svg>
        </button>
        <div className="ml-[72px] flex items-center gap-[9px]">
          <button aria-label="蒙版图层">
            <Svg w={14} h={12}>
              <path d="M0 0h14v12H0z" fill="#b0b0b0" />
              <circle cx="7" cy="6" r="4" fill="#3a3a3a" />
            </Svg>
          </button>
          <button aria-label="调整图层">
            <Svg w={12}>
              <circle cx="6" cy="6" r="5.500" stroke="#b0b0b0" />
              <path d="M10 2L2 10A5.500 5.500 0 0 1 10 2z" fill="#b0b0b0" />
            </Svg>
          </button>
          <button aria-label="图层特效" className="font-['Liberation_Serif',serif] text-base leading-4 italic">
            fx
          </button>
        </div>
        <div className="ml-auto flex items-center gap-3">
          <button aria-label="添加图层">
            <Svg w={10} h={12}>
              <path d="M.5.500h5l4 4.500v6.500h-9zM5.500.500V5h4" stroke="#b0b0b0" />
            </Svg>
          </button>
          <button aria-label="添加像素图层">
            <Svg w={10} h={12}>
              <path d="M0 0h10v12H0z" fill="#a5a5a5" />
              <path d="M1 1h2v2H1zM5 1h2v2H5zM3 3h2v2H3zM7 3h2v2H7zM1 5h2v2H1zM5 5h2v2H5zM3 7h2v2H3zM7 7h2v2H7zM1 9h2v2H1zM5 9h2v2H5z" fill="#404040" />
            </Svg>
          </button>
          <button aria-label="删除图层">
            <Svg w={10} h={13}>
              <path d="M0 2.500h10M3.500 2.500v-2h3v2M1.500 4v8.500h7V4M3.800 5v6M6.200 5v6" stroke="#a5a5a5" />
            </Svg>
          </button>
        </div>
      </div>
    </section>
  );
}

function NumberField({ id, label, value }: { id: string; label: string; value: string }) {
  return (
    <div className="flex items-center justify-end gap-1">
      <label htmlFor={id}>{label}</label>
      <input id={id} defaultValue={value} className="h-5 w-[65px] rounded-xs border border-[#262626] bg-[#303030] pl-[5px] shadow-[0_1px_0_#555] outline-none" />
    </div>
  );
}

function AngleField({ label }: { label: string }) {
  return (
    <div className="mt-1.5 flex items-center justify-end gap-1">
      <span>{label}</span>
      <Dropdown label={label} value="0 °" className="w-[65px]" />
    </div>
  );
}

function TransformPanel() {
  return (
    <section className="flex flex-1 flex-col">
      <TabBar tabs={['变换', '历史记录', '导航器']} />
      <div className="flex items-start pt-3 pr-2 pl-5 text-[#f0f0f0]">
        <button aria-label="变换锚点" className="mt-2">
          <Svg w={39}>
            <path d="M5 5h30v30H5z" fill="#676767" />
            <path d="M17 2h6v6h-6zM32 2h6v6h-6zM2 17h6v6H2zM17 17h6v6h-6zM32 17h6v6h-6zM2 32h6v6H2zM17 32h6v6h-6zM32 32h6v6h-6z" fill="#b0b0b0" />
            <path d="M1 0h9v9H1z" fill="#fff" />
          </Svg>
        </button>
        <div className="ml-auto grid grid-cols-2 gap-x-3 gap-y-1">
          <NumberField id="pos-x" label="X:" value="50.9 mm" />
          <NumberField id="size-w" label="W:" value="28.2 mm" />
          <NumberField id="pos-y" label="Y:" value="59.8 mm" />
          <NumberField id="size-h" label="H:" value="28.2 mm" />
          <AngleField label="R:" />
          <AngleField label="S:" />
        </div>
        <button aria-label="锁定宽高比" className="mt-[15px] ml-1.5">
          <Svg w={5} h={14}>
            <rect x=".5" y=".5" width="4" height="5" rx="2" stroke="#888" />
            <rect x=".5" y="8.500" width="4" height="5" rx="2" stroke="#888" />
            <path d="M2.500 3v8" stroke="#999" />
          </Svg>
        </button>
      </div>
    </section>
  );
}

function StatusBar() {
  return (
    <footer className="flex h-[26px] shrink-0 items-center justify-between bg-[#333] pr-1.5 pl-[17px] text-xs text-[#b5b5b5]">
      <p>
        已选中 'Cafés'。 <b className="text-white">拖动</b> 移动选取项。<b className="text-white">单击</b> 另一个对象将其选中。
        <b className="text-white">单击</b> 空白区域取消选择。
      </p>
      <Svg w={8} className="mt-2">
        <path d="M6.500 0v8M4.500 2v6M2.500 4v4M.5 6v2" stroke="#999" strokeDasharray="1 1" />
      </Svg>
    </footer>
  );
}

export default function App() {
  return (
    <div className="flex h-screen flex-col overflow-hidden bg-[#333] font-['Open_Sans','Noto_Sans_CJK_SC',sans-serif] text-[11px]">
      <TitleBar />
      <Toolbar />
      <ContextBar />
      <div className="flex min-h-0 flex-1">
        <ToolColumn />
        <AssetsPanel />
        <DocumentView />
        <aside className="flex w-[272px] shrink-0 flex-col border-x border-[#2b2b2b] bg-[#404040]">
          <ColourPanel />
          <LayersPanel />
          <TransformPanel />
        </aside>
      </div>
      <StatusBar />
    </div>
  );
}
